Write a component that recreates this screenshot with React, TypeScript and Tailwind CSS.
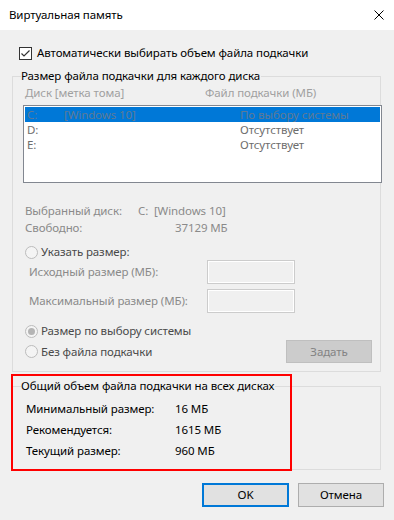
import React from "react";

function Radio({ checked }: { checked?: boolean }) {
  return (
    <span className="w-[13px] h-[13px] rounded-full border border-[#bcbcbc] bg-[#f4f4f4] flex items-center justify-center shrink-0">
      {checked && <span className="w-[7px] h-[7px] rounded-full bg-[#b4b4b4]" />}
    </span>
  );
}

function TextBox() {
  return (
    <div className="w-[88px] h-[24px] border border-[#cccccc] bg-[#f0f0f0] shadow-[inset_0_0_0_1px_#ffffff]" />
  );
}

export default function App() {
  return (
    <div
      className="relative w-[394px] h-[520px] bg-[#f0f0f0] text-[11.5px] tracking-[-0.1px] leading-[16px] text-black overflow-hidden"
      style={{ fontFamily: '"Noto Sans", "Open Sans", sans-serif' }}
    >
      {/* title bar */}
      <div className="h-[30px] bg-white flex items-center justify-between pl-[9px] pr-[10px]">
        <span>Виртуальная память</span>
        <svg width="10" height="10" viewBox="0 0 10 10">
          <path d="M0.5 0.5 L9.5 9.5 M9.5 0.5 L0.5 9.5" stroke="#000" strokeWidth="1" />
        </svg>
      </div>

      {/* checkbox */}
      <div className="mt-[15px] h-[16px] flex items-center pl-[19px] gap-[5px]">
        <span className="w-[13px] h-[13px] border border-[#333333] bg-white flex items-center justify-center">
          <svg width="11" height="11" viewBox="0 0 11 11">
            <path d="M1.5 5.5 L4 8 L9.5 2.5" fill="none" stroke="#333" strokeWidth="1.2" />
          </svg>
        </span>
        <span>Автоматически выбирать объем файла подкачки</span>
      </div>

      {/* group 1 */}
      <div className="relative mt-[15px] ml-[12px] w-[369px] border border-[#dcdcdc] pb-[8px]">
        <span className="absolute -top-[9px] left-[8px] bg-[#f0f0f0] pr-[1px]">
          Размер файла подкачки для каждого диска
        </span>
        <div className="pt-[8px] h-[24px] flex items-center pl-[12px] text-[#a0a0a0]">
          <span className="w-[180px]">Диск [метка тома]</span>
          <span>Файл подкачки (МБ)</span>
        </div>
        <div className="mt-[4px] ml-[10px] -mr-[2px] h-[78px] border border-[#828790] bg-white pt-[1px] px-[1px] text-[#6d6d6d] leading-[15px]">
          <div className="h-[15px] bg-[#0078d7] flex items-center text-[#5f7a95]">
            <span className="pl-[2px] w-[39px]">C:</span>
            <span className="w-[176px]">[Windows 10]</span>
            <span>По выбору системы</span>
          </div>
          <div className="h-[15px] flex items-center">
            <span className="pl-[2px] w-[215px]">D:</span>
            <span>Отсутствует</span>
          </div>
          <div className="h-[15px] flex items-center">
            <span className="pl-[2px] w-[215px]">E:</span>
            <span>Отсутствует</span>
          </div>
        </div>

        <div className="mt-[20px] h-[16px] flex items-center pl-[12px] text-[#8a8a8a]">
          <span className="w-[113px]">Выбранный диск:</span>
          <span>C:&nbsp;&nbsp;[Windows 10]</span>
        </div>
        <div className="h-[17px] flex items-center pl-[12px] text-[#8a8a8a]">
          <span className="w-[150px]">Свободно:</span>
          <span>37129 МБ</span>
        </div>

        <div className="mt-[8px] h-[16px] flex items-center pl-[12px] gap-[3px] text-[#4a4a4a]">
          <Radio />
          <span>Указать размер:</span>
        </div>
        <div className="h-[24px] flex items-center pl-[16px] text-[#8a8a8a]">
          <span className="w-[178px]">Исходный размер (МБ):</span>
          <TextBox />
        </div>
        <div className="mt-[5px] h-[24px] flex items-center pl-[16px] text-[#8a8a8a]">
          <span className="w-[178px]">Максимальный размер (МБ):</span>
          <TextBox />
        </div>

        <div className="mt-[10px] h-[16px] flex items-center pl-[12px] gap-[3px] text-[#4a4a4a]">
          <Radio checked />
          <span>Размер по выбору системы</span>
        </div>
        <div className="mt-[1px] h-[23px] flex items-center justify-between pl-[12px] pr-[8px] text-[#4a4a4a]">
          <div className="flex items-center gap-[3px]">
            <Radio />
            <span>Без файла подкачки</span>
          </div>
          <div className="w-[86px] h-[23px] bg-[#cccccc] border border-[#bfbfbf] flex items-center justify-center text-[#838383]">
            Задать
          </div>
        </div>
      </div>

      {/* group 2 */}
      <div className="relative mt-[14px] ml-[12px] w-[369px] border border-[#dcdcdc] pt-[14px] pb-[10px]">
        <span className="absolute -top-[9px] left-[8px] bg-[#f0f0f0] pr-[1px]">
          Общий объем файла подкачки на всех дисках
        </span>
        <div className="h-[16px] flex items-center pl-[13px]">
          <span className="w-[149px]">Минимальный размер:</span>
          <span>16 МБ</span>
        </div>
        <div className="mt-[5px] h-[16px] flex items-center pl-[13px]">
          <span className="w-[149px]">Рекомендуется:</span>
          <span>1615 МБ</span>
        </div>
        <div className="mt-[5px] h-[16px] flex items-center pl-[13px]">
          <span className="w-[149px]">Текущий размер:</span>
          <span>960 МБ</span>
        </div>
      </div>

      {/* red highlight */}
      <div className="absolute left-[11px] top-[374px] w-[281px] h-[97px] border-2 border-[#ff0000] pointer-events-none" />

      {/* buttons */}
      <div className="mt-[13px] flex justify-end gap-[9px] pr-[10px]">
        <div className="w-[87px] h-[24px] bg-[#e1e1e1] border-2 border-[#0078d7] flex items-center justify-center">
          OK
        </div>
        <div className="w-[86px] h-[24px] bg-[#e1e1e1] border border-[#adadad] flex items-center justify-center">
          Отмена
        </div>
      </div>
    </div>
  );
}
